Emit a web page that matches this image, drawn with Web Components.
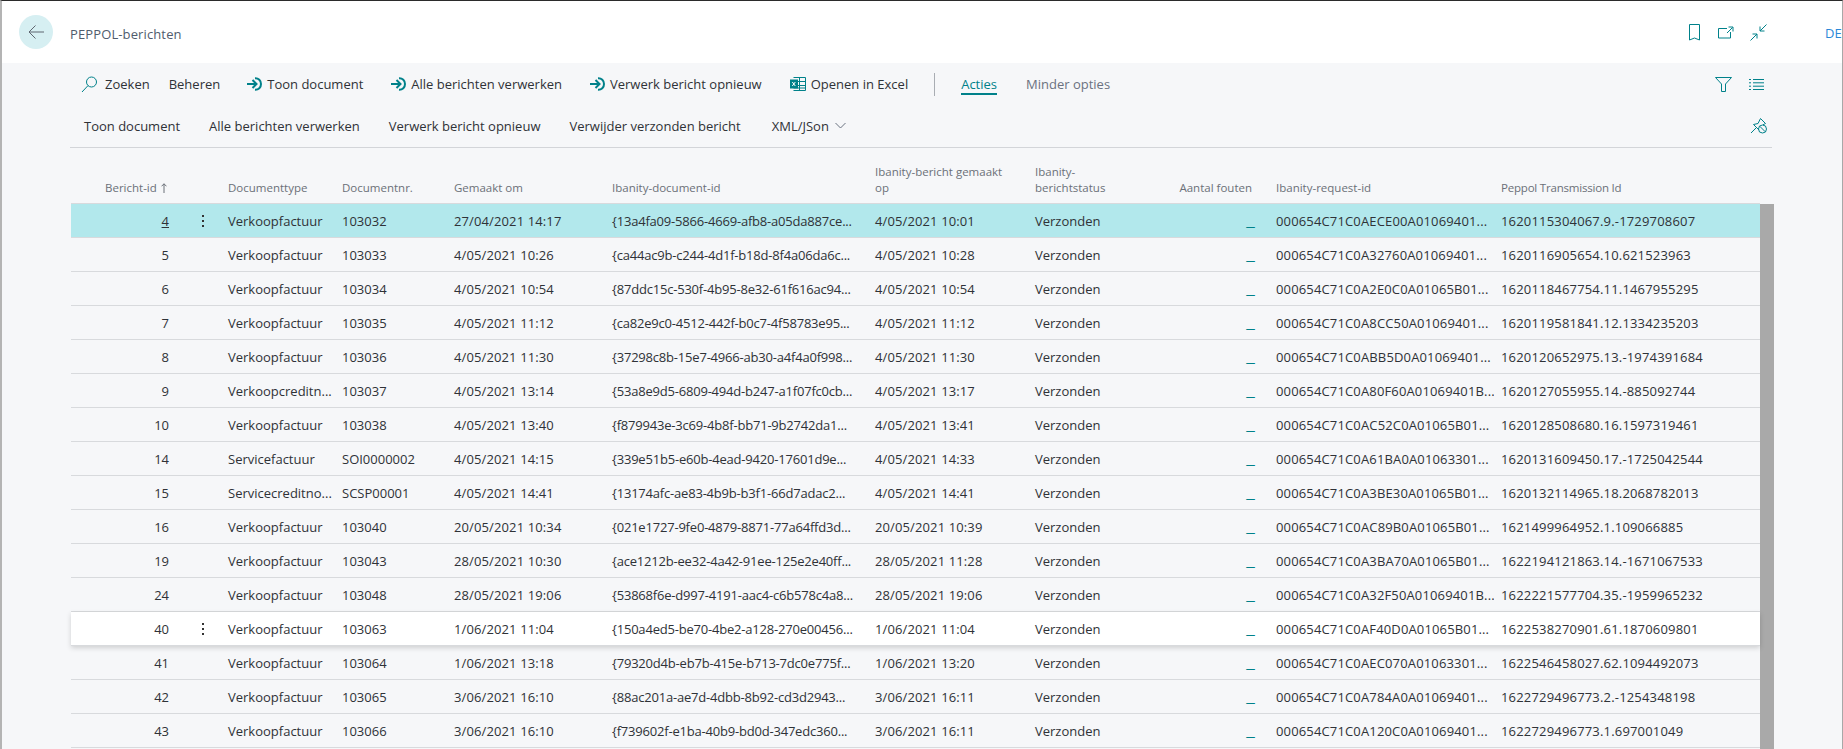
<!DOCTYPE html>
<html lang="nl">
<head>
<meta charset="utf-8">
<title>PEPPOL-berichten</title>
<style>
  html, body { margin: 0; height: 100%; overflow: hidden; background: #fff; }
  body { font-family: "Open Sans", "Noto Sans", sans-serif; }
</style>
</head>
<body>
<pep-app>
  <pep-header title-text="PEPPOL-berichten"></pep-header>
  <pep-actions></pep-actions>
  <pep-grid></pep-grid>
</pep-app>
<script>
const TEAL = '#00818a';
const COLS = '114px 36px 114px 112px 158px 263px 160px 142px 99px 225px 265px';

const ROWS = [
  ['4','Verkoopfactuur','103032','27/04/2021 14:17','{13a4fa09-5866-4669-afb8-a05da887ce...','4/05/2021 10:01','000654C71C0AECE00A01069401...','1620115304067.9.-1729708607','selected'],
  ['5','Verkoopfactuur','103033','4/05/2021 10:26','{ca44ac9b-c244-4d1f-b18d-8f4a06da6c...','4/05/2021 10:28','000654C71C0A32760A01069401...','1620116905654.10.621523963'],
  ['6','Verkoopfactuur','103034','4/05/2021 10:54','{87ddc15c-530f-4b95-8e32-61f616ac94...','4/05/2021 10:54','000654C71C0A2E0C0A01065B01...','1620118467754.11.1467955295'],
  ['7','Verkoopfactuur','103035','4/05/2021 11:12','{ca82e9c0-4512-442f-b0c7-4f58783e95...','4/05/2021 11:12','000654C71C0A8CC50A01069401...','1620119581841.12.1334235203'],
  ['8','Verkoopfactuur','103036','4/05/2021 11:30','{37298c8b-15e7-4966-ab30-a4f4a0f998...','4/05/2021 11:30','000654C71C0ABB5D0A01069401...','1620120652975.13.-1974391684'],
  ['9','Verkoopcreditn...','103037','4/05/2021 13:14','{53a8e9d5-6809-494d-b247-a1f07fc0cb...','4/05/2021 13:17','000654C71C0A80F60A01069401B...','1620127055955.14.-885092744'],
  ['10','Verkoopfactuur','103038','4/05/2021 13:40','{f879943e-3c69-4b8f-bb71-9b2742da1...','4/05/2021 13:41','000654C71C0AC52C0A01065B01...','1620128508680.16.1597319461'],
  ['14','Servicefactuur','SOI0000002','4/05/2021 14:15','{339e51b5-e60b-4ead-9420-17601d9e...','4/05/2021 14:33','000654C71C0A61BA0A01063301...','1620131609450.17.-1725042544'],
  ['15','Servicecreditno...','SCSP00001','4/05/2021 14:41','{13174afc-ae83-4b9b-b3f1-66d7adac2...','4/05/2021 14:41','000654C71C0A3BE30A01065B01...','1620132114965.18.2068782013'],
  ['16','Verkoopfactuur','103040','20/05/2021 10:34','{021e1727-9fe0-4879-8871-77a64ffd3d...','20/05/2021 10:39','000654C71C0AC89B0A01065B01...','1621499964952.1.109066885'],
  ['19','Verkoopfactuur','103043','28/05/2021 10:30','{ace1212b-ee32-4a42-91ee-125e2e40ff...','28/05/2021 11:28','000654C71C0A3BA70A01065B01...','1622194121863.14.-1671067533'],
  ['24','Verkoopfactuur','103048','28/05/2021 19:06','{53868f6e-d997-4191-aac4-c6b578c4a8...','28/05/2021 19:06','000654C71C0A32F50A01069401B...','1622221577704.35.-1959965232'],
  ['40','Verkoopfactuur','103063','1/06/2021 11:04','{150a4ed5-be70-4be2-a128-270e00456...','1/06/2021 11:04','000654C71C0AF40D0A01065B01...','1622538270901.61.1870609801','hover'],
  ['41','Verkoopfactuur','103064','1/06/2021 13:18','{79320d4b-eb7b-415e-b713-7dc0e775f...','1/06/2021 13:20','000654C71C0AEC070A01063301...','1622546458027.62.1094492073'],
  ['42','Verkoopfactuur','103065','3/06/2021 16:10','{88ac201a-ae7d-4dbb-8b92-cd3d2943...','3/06/2021 16:11','000654C71C0A784A0A01069401...','1622729496773.2.-1254348198'],
  ['43','Verkoopfactuur','103066','3/06/2021 16:10','{f739602f-e1ba-40b9-bd0d-347edc360...','3/06/2021 16:11','000654C71C0A120C0A01069401...','1622729496773.1.697001049'],
];

const svg = (w, h, vb, inner) => `<svg width="${w}" height="${h}" viewBox="${vb}" fill="none" stroke="${TEAL}" stroke-width="1" aria-hidden="true">${inner}</svg>`;

const ICONS = {
  search: svg(17, 17, '0 0 17 17', '<circle cx="10.500" cy="6" r="5"/><path d="M7 9.600 1 16"/>'),
  run: svg(16, 14, '0 0 16 14', '<path d="M0 7h9" stroke-width="2"/><path d="M5.500 3l4 4-4 4" stroke-width="2"/><path d="M8 1.200C11.500 1 14 3.500 14 7s-2.500 6-6 5.800" stroke-width="2"/>'),
  excel: `<svg width="16" height="15" viewBox="0 0 16 15" fill="none" stroke="${TEAL}" aria-hidden="true"><path d="M3.500.5h12v13h-12M9.500.5v13M3.500 4.500h12M3.500 8.500h12M3.500 11h12"/><rect x=".5" y="3" width="7" height="8" fill="${TEAL}"/><path d="M2.300 5l3 4M5.300 5l-3 4" stroke="#fff"/></svg>`,
  chevron: `<svg width="11" height="7" viewBox="0 0 11 7" fill="none" stroke="#6b7280" aria-hidden="true"><path d="M.5 1l5 5 5-5"/></svg>`,
  bookmark: svg(11, 17, '0 0 11 17', '<path d="M.5.5h10v15.500L5.500 14 .5 16z"/>'),
  popout: svg(16, 13, '0 0 16 13', '<path d="M9 2.500H.5v9.500h12V6"/><path d="M9 7l5.500-5.500M10.500 1h4.500v4.500"/>'),
  collapse: svg(17, 17, '0 0 17 17', '<path d="M16.500.5 10 7M10 2.500V7h4.500"/><path d="M.5 16.500 7 10M2.500 10H7v4.500"/>'),
  filter: svg(17, 15, '0 0 17 15', '<path d="M.5.5h16L10.500 7v7.500h-4V7z"/>'),
  list: svg(15, 11, '0 0 15 11', '<path d="M0 .5h2M4 .5h11M0 3.800h2M4 3.800h11M0 7.200h2M4 7.200h11M0 10.500h2M4 10.500h11"/>'),
  pin: svg(17, 17, '0 0 17 17', '<path d="M1 16l5-5"/><path d="M3.500 7.500 8 6.500 10.500 1.500l5 5-2.500 1.300"/><path d="M3.500 7.500l5.500 5.500"/><circle cx="12.500" cy="12" r="4"/><path d="M9.800 9.300l5.400 5.400"/>'),
  back: `<svg width="16" height="14" viewBox="0 0 16 14" fill="none" stroke="#5f6670" aria-hidden="true"><path d="M16 7H1M7.500.5 1 7l6.500 6.500"/></svg>`,
  sort: `<svg width="6" height="10" viewBox="0 0 6 10" fill="none" stroke="#6b7078" aria-hidden="true"><path d="M3 10V.8M.5 3.300 3 .8l2.500 2.500"/></svg>`,
};

// app frame
customElements.define('pep-app', class extends HTMLElement {
  constructor() {
    super();
    this.attachShadow({ mode: 'open' }).innerHTML = `
      <style>
        :host {
          display: flex; flex-direction: column; box-sizing: border-box;
          height: 749px; overflow: hidden; background: #f6f7f9;
          border-top: 1px solid #2b2b2b; border-left: 2px solid #b4b4b4; border-right: 1px solid #a8a8a8;
          font-family: "Open Sans", "Noto Sans", sans-serif; color: #2b2b2b;
        }
      </style>
      <slot></slot>`;
  }
});

customElements.define('pep-header', class extends HTMLElement {
  constructor() {
    super();
    this.attachShadow({ mode: 'open' }).innerHTML = `
      <style>
        :host { display: flex; align-items: center; height: 62px; background: #fff; flex: none; }
        .back { width: 34px; height: 34px; border-radius: 50%; background: #d6eff2; margin: 0 17px 0 17px; display: flex; align-items: center; justify-content: center; }
        .title { font-size: 13px; letter-spacing: .12px; color: #505c6d; flex: 1; padding-top: 4px; }
        .tools { display: flex; align-items: center; margin-right: 58px; }
        .tools svg { display: block; }
        .tools svg:nth-child(2) { margin: 0 16px 0 18px; }
        .lang { color: #2b88d8; font-size: 13px; width: 17px; padding-top: 2px; }
      </style>
      <div class="back">${ICONS.back}</div>
      <div class="title">${this.getAttribute('title-text')}</div>
      <div class="tools">${ICONS.bookmark}${ICONS.popout}${ICONS.collapse}</div>
      <div class="lang">DE</div>`;
  }
});

customElements.define('pep-action', class extends HTMLElement {
  constructor() {
    super();
    const icon = this.getAttribute('icon');
    this.attachShadow({ mode: 'open' }).innerHTML = `
      <style>
        :host { display: inline-flex; align-items: center; gap: var(--icon-gap, 4px); font-size: 13px; color: #2f3237; white-space: nowrap; }
        svg { display: block; }
      </style>
      ${icon ? ICONS[icon] : ''}<slot></slot>`;
  }
});

customElements.define('pep-actions', class extends HTMLElement {
  constructor() {
    super();
    this.attachShadow({ mode: 'open' }).innerHTML = `
      <style>
        :host { display: block; flex: none; margin: 0 68px 0 68px; height: 84px; border-bottom: 1px solid #d3d5d9; box-sizing: content-box; width: 1702px; }
        .bar { display: flex; align-items: center; height: 42px; }
        .one { padding-left: 11px; }
        .two { padding-left: 14px; gap: 29px; height: 41px; }
        .sep { width: 1px; height: 23px; background: #a9adb3; margin: 0 26px; }
        .tab { font-size: 13px; color: #6b7280; position: relative; }
        .tab.on { color: ${TEAL}; border-bottom: 2px solid ${TEAL}; line-height: 18px; margin-top: 2px; }
        .right { margin-left: auto; display: flex; align-items: center; gap: 17px; padding-right: 8px; }
        .two .right { padding-right: 5px; }
        .right svg { display: block; }
        .more { display: inline-flex; align-items: center; gap: 6px; margin-left: 2px; }
      </style>
      <div class="bar one">
        <pep-action icon="search" style="margin-right:19px;--icon-gap:7px">Zoeken</pep-action>
        <pep-action style="margin-right:27px">Beheren</pep-action>
        <pep-action icon="run" style="margin-right:28px">Toon document</pep-action>
        <pep-action icon="run" style="margin-right:28px">Alle berichten verwerken</pep-action>
        <pep-action icon="run" style="margin-right:28px">Verwerk bericht opnieuw</pep-action>
        <pep-action icon="excel" style="--icon-gap:5px">Openen in Excel</pep-action>
        <div class="sep"></div>
        <div class="tab on">Acties</div>
        <div class="tab" style="margin-left:29px">Minder opties</div>
        <div class="right">${ICONS.filter}${ICONS.list}</div>
      </div>
      <div class="bar two">
        <pep-action>Toon document</pep-action>
        <pep-action>Alle berichten verwerken</pep-action>
        <pep-action>Verwerk bericht opnieuw</pep-action>
        <pep-action>Verwijder verzonden bericht</pep-action>
        <pep-action><span class="more">XML/JSon ${ICONS.chevron}</span></pep-action>
        <div class="right">${ICONS.pin}</div>
      </div>`;
  }
});

customElements.define('pep-row', class extends HTMLElement {
  set data(r) {
    const [id, type, nr, made, doc, sent, req, tx, state] = r;
    const kebab = state ? '<span class="kebab"><i></i><i></i><i></i></span>' : '';
    this.shadowRoot.innerHTML = `
      <style>
        :host { display: grid; grid-template-columns: ${COLS}; height: 34px; box-sizing: border-box; border-bottom: 1px solid #d8dadd; font-size: 13px; color: #2f3237; align-items: center; white-space: nowrap; background: #f6f7f9; position: relative; }
        :host([state=selected]) { background: #b2e8ec; }
        :host([state=hover]) { background: #fff; box-shadow: 0 2px 5px rgba(0,0,0,.16); z-index: 1; }
        div { padding-left: 7px; overflow: hidden; }
        .id { text-align: right; padding: 0 16px 0 0; }
        :host([state=selected]) .id span { text-decoration: underline; }
        .ct { padding: 0 14px 0 0; color: ${TEAL}; display: flex; justify-content: flex-end; }
        .ct span { transform: scaleX(1.5); transform-origin: right; }
        .kb { padding: 0; display: flex; justify-content: center; }
        .kebab { display: flex; flex-direction: column; gap: 3px; }
        .kebab i { width: 2px; height: 2px; background: #333; display: block; }
        .date { letter-spacing: .12px; }
        .doc { letter-spacing: -.2px; }
        .req { letter-spacing: .15px; }
        .tx { letter-spacing: .18px; }
      </style>
      <div class="id"><span>${id}</span></div><div class="kb">${kebab}</div><div>${type}</div><div>${nr}</div><div class="date">${made}</div><div class="doc">${doc}</div><div class="date">${sent}</div><div>Verzonden</div><div class="ct"><span>_</span></div><div class="req">${req}</div><div class="tx">${tx}</div>`;
  }
  constructor() {
    super();
    this.attachShadow({ mode: 'open' });
  }
});

customElements.define('pep-grid', class extends HTMLElement {
  constructor() {
    super();
    const root = this.attachShadow({ mode: 'open' });
    root.innerHTML = `
      <style>
        :host { display: block; flex: 1; margin-left: 69px; width: 1703px; min-height: 0; }
        .head { display: grid; grid-template-columns: ${COLS}; height: 56px; font-size: 11.500px; line-height: 16px; color: #6b7078; align-items: end; border-bottom: 1px solid #d8dadd; box-sizing: border-box; width: 1689px; }
        .head div { padding: 0 8px 7px 7px; }
        .head .id { padding-left: 34px; white-space: nowrap; display: flex; align-items: center; gap: 4px; }
        .head .ct { text-align: right; padding-right: 17px; padding-left: 0; white-space: nowrap; }
        .head .tx { letter-spacing: -.2px; }
        .body { display: flex; }
        .rows { width: 1689px; }
        .bar { width: 14px; background: #a9a9a9; height: 560px; }
      </style>
      <div class="head">
        <div class="id">Bericht-id ${ICONS.sort}</div><div></div><div>Documenttype</div><div>Documentnr.</div><div>Gemaakt om</div><div>Ibanity-document-id</div><div>Ibanity-bericht gemaakt<br>op</div><div>Ibanity-<br>berichtstatus</div><div class="ct">Aantal fouten</div><div>Ibanity-request-id</div><div class="tx">Peppol Transmission Id</div>
      </div>
      <div class="body"><div class="rows"></div><div class="bar"></div></div>`;
    const rows = root.querySelector('.rows');
    for (const r of ROWS) {
      const row = document.createElement('pep-row');
      if (r[8]) row.setAttribute('state', r[8]);
      row.data = r;
      rows.appendChild(row);
    }
  }
});
</script>
</body>
</html>
